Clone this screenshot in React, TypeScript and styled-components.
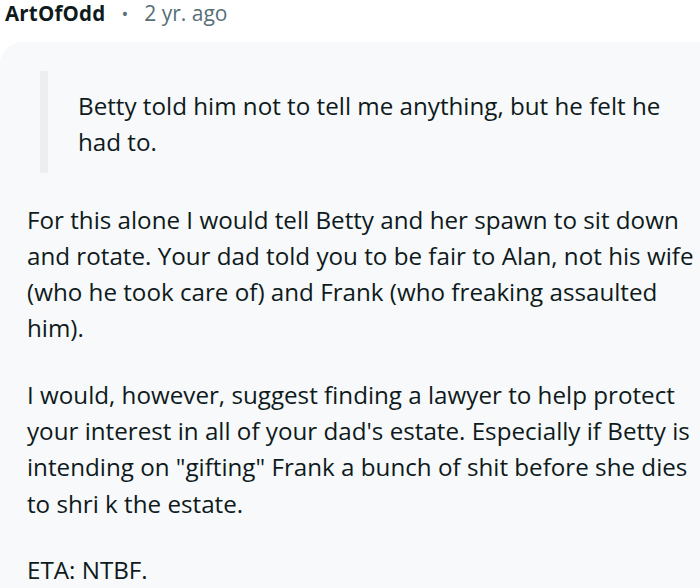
import React from "react";
import styled, { createGlobalStyle } from "styled-components";

const GlobalStyle = createGlobalStyle`
  html, body {
    margin: 0;
    padding: 0;
    background: #ffffff;
    overflow: hidden;
  }
  body {
    font-family: "Open Sans", "Noto Sans", sans-serif;
    color: #0f1a1c;
  }
`;

const Page = styled.div`
  width: 700px;
  height: 588px;
  overflow: hidden;
`;

const Meta = styled.div`
  display: flex;
  align-items: baseline;
  gap: 16px;
  padding: 0 0 0 5px;
  font-size: 20.5px;
  line-height: 27px;
`;

const Author = styled.span`
  font-weight: 700;
  color: #0f1a1c;
  letter-spacing: 0.2px;
`;

const Dot = styled.span`
  color: #576f76;
  font-size: 18px;
`;

const Age = styled.span`
  color: #576f76;
  font-size: 21px;
`;

const Card = styled.div`
  margin-top: 14px;
  width: 760px;
  background: #f7f9fa;
  border-radius: 22px 0 0 0;
  padding: 29px 0 40px 27px;
  box-sizing: border-box;
  min-height: 560px;
`;

const Quote = styled.blockquote`
  margin: 0 0 29px 13px;
  padding: 17px 0 12px 30px;
  border-left: 8px solid #eceeef;
`;

const Para = styled.p<{ $last?: boolean }>`
  margin: 0 0 ${(p) => (p.$last ? 0 : 30)}px 0;
  font-size: 24.2px;
  line-height: 36.3px;
  color: #0f1a1c;
`;

export default function App() {
  return (
    <Page>
      <GlobalStyle />
      <Meta>
        <Author>ArtOfOdd</Author>
        <Dot>•</Dot>
        <Age>2 yr. ago</Age>
      </Meta>
      <Card>
        <Quote>
          <Para $last>
            Betty told him not to tell me anything, but he felt he
            <br />
            had to.
          </Para>
        </Quote>
        <Para>
          For this alone I would tell Betty and her spawn to sit down
          <br />
          and rotate. Your dad told you to be fair to Alan, not his wife
          <br />
          (who he took care of) and Frank (who freaking assaulted
          <br />
          him).
        </Para>
        <Para>
          I would, however, suggest finding a lawyer to help protect
          <br />
          your interest in all of your dad's estate. Especially if Betty is
          <br />
          intending on "gifting" Frank a bunch of shit before she dies
          <br />
          to shri k the estate.
        </Para>
        <Para $last>ETA: NTBF.</Para>
      </Card>
    </Page>
  );
}
